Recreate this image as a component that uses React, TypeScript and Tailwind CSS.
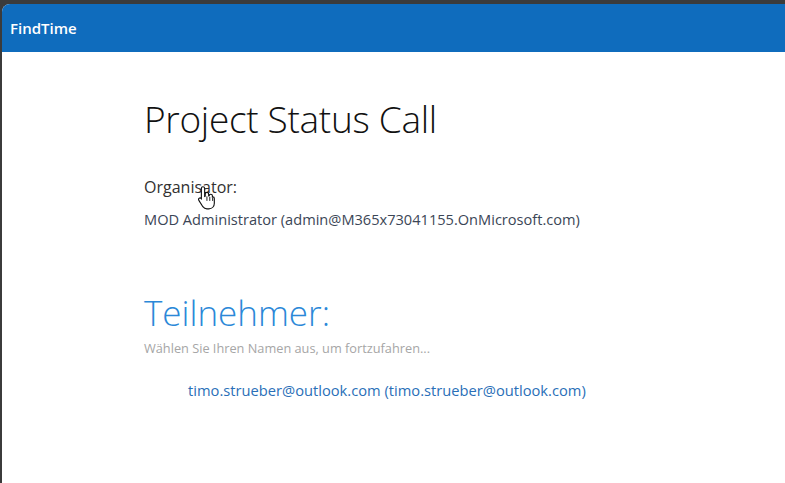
export default function App() {
  return (
    <div className="min-h-screen h-[483px] bg-[#3b3b3b] pt-[4px] pl-[2px] overflow-hidden" style={{ fontFamily: '"Open Sans", "Noto Sans", sans-serif' }}>
      <div className="h-full bg-white rounded-tl-[8px] overflow-hidden flex flex-col">
        {/* Header */}
        <div className="h-[48px] bg-[#0f6cbd] flex items-center px-[8px]">
          <span className="text-white text-[15px] font-semibold">FindTime</span>
        </div>

        {/* Content */}
        <div className="pl-[142px] pt-[41px] relative">
          <h1 className="text-[37px] font-light text-[#111] leading-[52px] tracking-[-0.3px]">Project Status Call</h1>

          <div className="mt-[31px] text-[16px] text-[#323130] leading-[22px]">Organisator:</div>
          <div className="mt-[11px] text-[14.6px] text-[#3b4656] leading-[20px]">
            MOD Administrator (admin@M365x73041155.OnMicrosoft.com)
          </div>

          <h2 className="mt-[62px] text-[35px] font-light text-[#2b88d8] leading-[44px]">Teilnehmer:</h2>
          <div className="mt-[5px] text-[12.75px] text-[#a6a6a6] leading-[16px]">Wählen Sie Ihren Namen aus, um fortzufahren...</div>

          <div className="mt-[24px] pl-[44px] text-[14.7px] text-[#2a6fb8] leading-[20px]">
            timo.strueber@outlook.com (timo.strueber@outlook.com)
          </div>

          {/* Hand cursor */}
          <svg className="absolute left-[195px] top-[133px]" width="21" height="25" viewBox="0 0 18 22">
            <path
              d="M5 1.5c.9 0 1.5.6 1.5 1.5v7l.5-.2V8c0-.9.6-1.5 1.5-1.5S10 7.1 10 8v1.5l.5-.1c0-.8.6-1.3 1.4-1.3.8 0 1.4.6 1.4 1.4v1l.4-.1c.8 0 1.3.6 1.3 1.4v4.2c0 2.8-2 5-4.8 5H8.5c-1.6 0-2.7-.7-3.6-1.9L1.4 13.5c-.5-.7-.3-1.5.3-1.9.6-.4 1.3-.3 1.8.3l.1.1V3c0-.9.6-1.5 1.4-1.5z"
              fill="#fff"
              stroke="#111"
              strokeWidth="1"
            />
            <path d="M8.5 10v4M11 10.5v3.5M13.5 11v3" stroke="#111" strokeWidth="0.8" />
          </svg>
        </div>
      </div>
    </div>
  );
}
